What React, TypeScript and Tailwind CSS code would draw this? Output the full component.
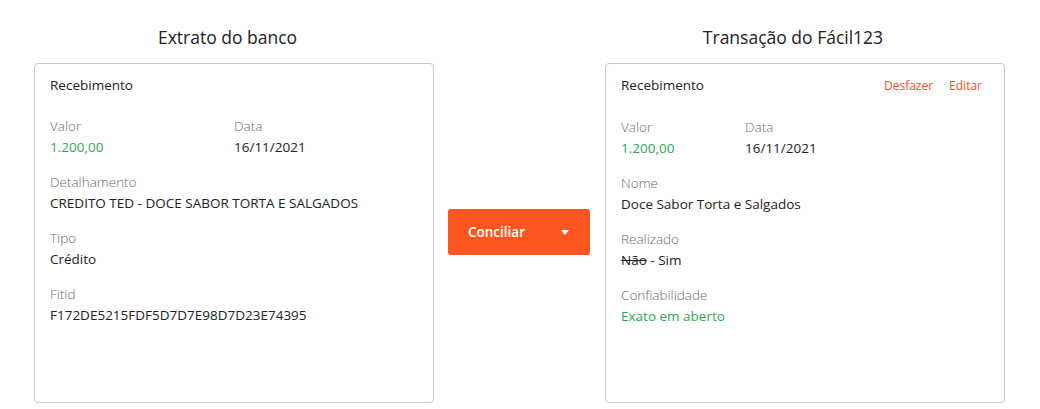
import React from "react";

function Field({ label, children, className = "" }: { label: string; children: React.ReactNode; className?: string }) {
  return (
    <div className={className}>
      <div className="text-[13.5px] leading-[21px] font-light text-[#6b6b6b]">{label}</div>
      <div className="text-[13.5px] leading-[21px] text-[#222]">{children}</div>
    </div>
  );
}

export default function App() {
  return (
    <div className="w-[1040px] h-[409px] bg-white flex pl-[34px]" style={{ fontFamily: '"Open Sans", sans-serif' }}>
      <div className="flex flex-col w-[400px]">
        <div className="text-[17.5px] leading-[25px] text-[#222] text-center pt-[25px] mb-[13px] pr-[13px]">Extrato do banco</div>
        <div className="h-[340px] border border-[#c8c8c8] rounded-[4px] px-[15px] pt-[11px]">
          <div className="text-[13.5px] leading-[21px] text-[#222]">Recebimento</div>
          <div className="flex mt-[20px]">
            <Field label="Valor" className="w-[184px]">
              <span className="text-[#2ea85a]">1.200,00</span>
            </Field>
            <Field label="Data">16/11/2021</Field>
          </div>
          <Field label="Detalhamento" className="mt-[14px]">CREDITO TED - DOCE SABOR TORTA E SALGADOS</Field>
          <Field label="Tipo" className="mt-[14px]">Crédito</Field>
          <Field label="Fitid" className="mt-[14px]">F172DE5215FDF5D7D7E98D7D23E74395</Field>
        </div>
      </div>
      <div className="w-[171px] flex items-start pl-[14px] pt-[209px]">
        <button className="w-[142px] h-[46px] rounded-[3px] bg-[#fd5620] text-white flex items-center pl-[20px] pr-[21px]">
          <span className="text-[13.5px] font-semibold flex-1 text-left">Conciliar</span>
          <svg width="8" height="5" viewBox="0 0 8 5"><path d="M0 0h8L4 5z" fill="#fff" /></svg>
        </button>
      </div>
      <div className="flex flex-col w-[400px]">
        <div className="text-[17.5px] leading-[25px] text-[#222] text-center pt-[25px] mb-[13px] pr-[24px]">Transação do Fácil123</div>
        <div className="h-[340px] border border-[#c8c8c8] rounded-[4px] px-[15px] pt-[11px]">
          <div className="flex items-center justify-between">
            <div className="text-[13.5px] leading-[21px] text-[#222]">Recebimento</div>
            <div className="flex gap-[16px] text-[12px] leading-[21px] text-[#f4511e] pr-[7px]">
              <span>Desfazer</span>
              <span>Editar</span>
            </div>
          </div>
          <div className="flex mt-[21px]">
            <Field label="Valor" className="w-[124px]">
              <span className="text-[#2ea85a]">1.200,00</span>
            </Field>
            <Field label="Data">16/11/2021</Field>
          </div>
          <Field label="Nome" className="mt-[14px]">Doce Sabor Torta e Salgados</Field>
          <Field label="Realizado" className="mt-[14px]">
            <span className="line-through">Não</span> - Sim
          </Field>
          <Field label="Confiabilidade" className="mt-[14px]">
            <span className="text-[#2ea85a]">Exato em aberto</span>
          </Field>
        </div>
      </div>
    </div>
  );
}
